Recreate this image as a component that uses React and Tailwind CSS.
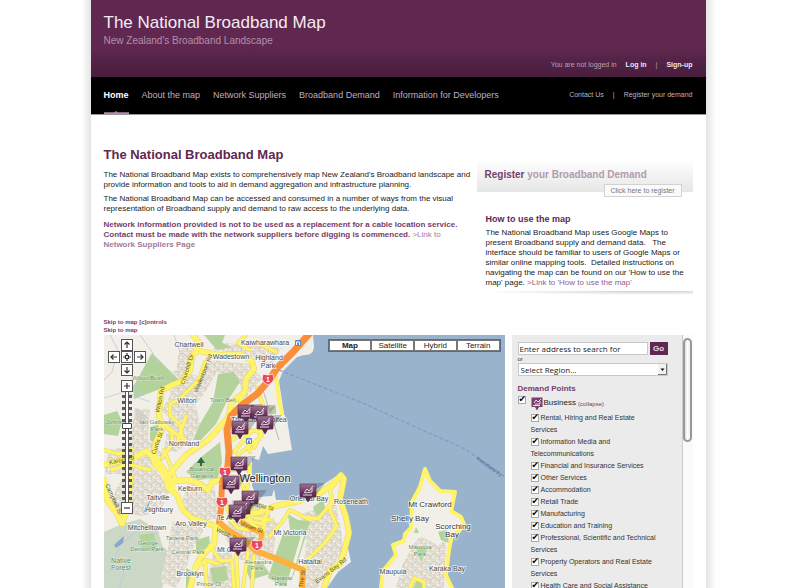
import React from "react";

const NAV = ["Home", "About the map", "Network Suppliers", "Broadband Demand", "Information for Developers"];
const MAP_TYPES = ["Map", "Satellite", "Hybrid", "Terrain"];
const SECTORS = [
  ["Rental, Hiring and Real Estate", "Services"],
  ["Information Media and", "Telecommunications"],
  ["Financial and Insurance Services"],
  ["Other Services"],
  ["Accommodation"],
  ["Retail Trade"],
  ["Manufacturing"],
  ["Education and Training"],
  ["Professional, Scientific and Technical", "Services"],
  ["Property Operators and Real Estate", "Services"],
  ["Health Care and Social Assistance"],
];

const PINS = [[246, 412], [259, 413], [265, 423], [240, 428], [239, 464], [231, 483], [250, 498], [242, 508], [237, 512], [308, 491], [238, 545]];
const SHIELDS = [[268, 379], [225, 472], [222, 502], [257, 545]];

const PARKS = [
  "M152 353 L182 383 L160 389 L134 399 L133 387 Z",
  "M218 374 L234 372 L240 382 L226 403 L216 424 L201 440 L193 440 L200 424 L213 402 Z",
  "M104 415 L117 411 L122 421 L118 436 L104 434 Z",
  "M150 427 L161 424 L163 433 L156 444 L150 440 Z",
  "M204 335 L225 335 L222 343 L232 347 L217 350 Z",
  "M220 442 L200 458 L186 472 L198 480 L218 478 L222 462 Z",
  "M284 531 L306 535 L294 574 L288 588 L268 578 L275 556 Z",
  "M196 540 L209 536 L211 551 L204 556 L196 553 Z",
  "M210 568 L226 566 L228 580 L213 584 Z",
  "M288 514 L298 520 L311 521 L306 531 L290 530 Z",
  "M139 535 L154 533 L157 552 L142 549 Z",
  "M245 566 L262 562 L270 574 L250 580 Z",
  "M186 568 L193 572 L193 588 L186 588 Z",
  "M313 507 L324 499 L325 511 L316 516 Z",
  "M438 532 L447 530 L449 543 L441 540 Z",
  "M416 527 L419 533 L414 533 Z",
  "M415 546 L428 548 L421 562 Z",
  "M416 581 L424 582 L422 588 L414 588 Z",
  "M270 408 L276 406 L276 414 L271 414 Z",
];

const SUBURBS = [
  "M180 346 L193 342 L192 362 L180 385 L162 392 L160 378 L176 370 Z",
  "M210 360 L250 364 L262 378 L246 398 L235 376 L217 372 L205 392 L190 412 L172 424 L162 410 L172 392 L200 380 Z",
  "M168 385 L184 372 L198 376 L192 398 L176 410 Z",
  "M168 420 L196 406 L200 424 L190 442 L176 452 L164 450 Z",
  "M135 408 L150 410 L148 438 L166 458 L140 474 L105 474 L108 450 L130 446 Z",
  "M128 472 L155 468 L170 490 L160 512 L140 516 L112 510 L116 488 Z",
  "M188 484 L214 486 L220 518 L196 522 L180 508 Z",
  "M172 522 L205 528 L192 550 L186 568 L176 588 L160 582 L168 548 Z",
  "M232 500 L262 506 L278 524 L272 560 L240 560 L226 540 Z",
  "M300 514 L336 504 L344 548 L330 572 L304 566 L306 540 Z",
  "M308 560 L326 562 L318 588 L304 588 Z",
  "M412 536 L446 548 L444 588 L398 588 L398 568 Z",
  "M214 342 L262 346 L282 348 L270 366 L240 354 L214 350 Z",
  "M214 548 L232 552 L234 588 L206 588 Z",
];

const MAIN_ROADS = [
  "M193 335 L199 343 L199 350 L192 356 L190 370 L182 381 L170 386 L161 391 L160 405 L159 416 L162 430 L156 442 L153 457",
  "M196 350 L208 353 L220 355 L240 354 L252 361 L254 369 L246 379 L245 392 L232 402 L228 418 L208 440 L186 455 L167 477",
  "M104 465 L120 461 L136 457 L146 451 L152 456 L156 466 L166 474 L168 488 L177 495 L183 510 L192 518 L212 525 L224 529",
  "M167 478 L176 481 L190 480 L200 484 L208 490 L212 482 L222 480",
  "M104 480 L107 500 L116 512 L122 524 L127 510 L129 490 L131 476",
  "M216 526 L214 544 L200 558 L196 566 L190 588",
  "M230 508 L244 513 L258 513 L275 506 L296 502 L316 496 L331 485 L341 475 L344 479 L340 499 L346 517 L349 533 L344 552 L340 564 L330 570 L324 588",
];

const MINOR_ROADS = [
  "M205 362 L199 380 L178 400 L170 404 L170 415 L180 425 L183 440",
  "M161 420 L172 431 L172 444 L162 458",
  "M186 416 L178 440 M163 425 L185 440",
  "M104 450 L118 454 L132 449 M112 470 L128 464 L150 470",
  "M257 388 L262 402 L266 415 L257 430 M246 388 L240 402",
  "M232 440 L246 430 L262 432 L254 448 M234 452 L252 430 M238 455 L262 436 M244 428 L250 452",
  "M232 470 L250 466 L246 500 M240 480 L252 508",
  "M240 502 L258 532 M246 520 L262 524 L270 508 M262 540 L266 516 M255 518 L272 520 M250 524 L264 530 M270 536 L282 522 L290 510 L310 520",
  "M306 517 L318 519 L332 502 L330 490 L340 478 M332 496 L330 510 L337 526 L324 544 L307 560 L303 572",
  "M236 550 L238 588 M248 552 L243 588 M254 556 L252 588",
  "M210 545 L220 561 L232 560 L234 588 M196 568 L206 560 L218 564 M205 562 L207 588",
  "M230 520 L238 528 L250 530 M224 500 L232 520",
  "M410 588 L414 578 L424 582 L424 588",
  "M246 335 L238 343 L250 350 M262 345 L276 352",
  "M170 478 L160 462 L150 455 M176 480 L164 450",
];

const LABELS = [
  ["Chartwell", 189, 347], ["Kaiwharawhara", 265, 345], ["Wadestown", 231, 359], ["Highland", 269, 360], ["Park", 268, 368],
  ["Wilton", 187, 403], ["Northland", 184, 446], ["Kelburn", 190, 491], ["Taitville", 158, 500], ["Highbury", 159, 512],
  ["Mitchelltown", 147, 530], ["Aro Valley", 191, 526], ["Brooklyn", 190, 576], ["Mt Victoria", 290, 535],
  ["Hataitai", 310, 564], ["Roseneath", 351, 504], ["Oriental Bay", 309, 501], ["Te Aro", 227, 520], ["Mt Cook", 230, 552],
  ["Thorndon", 246, 422], ["Pipitea", 276, 422], ["Maupuia", 393, 574], ["Karaka Bay", 447, 571],
];
const BIG_LABELS = [["Mt Crawford", 430, 507], ["Shelly Bay", 410, 521], ["Scorching", 453, 529], ["Bay", 452, 537]];
const PARK_LABELS = [
  ["Wilton Bush", 148, 380], ["Town Belt", 223, 402], ["Ian Galloway", 157, 424], ["Park", 157, 431], ["Johnston", 118, 424],
  ["Botanical", 202, 471], ["Gardens", 202, 478], ["Tanera Park", 182, 540], ["George", 148, 545], ["Denton Park", 147, 551],
  ["Central Park", 188, 554], ["Alexandra", 258, 564], ["Park", 257, 570], ["Hataitai", 282, 580], ["Park", 281, 586],
  ["Maupuia", 420, 549], ["Park", 420, 556], ["Prince Of", 209, 586],
];

function PinShape({ x, y }) {
  return (
    <g transform={`translate(${x} ${y})`}>
      <path d="M-5 7 L9 -8 L17 -8 L6 7 Z" fill="#444" opacity="0.3" />
      <path d="M-8 -7 H8 V6 H3 L0 11 L-3 6 H-8 Z" fill="url(#pinFill)" stroke="#57284c" strokeWidth="0.6" />
      <path d="M-5 4 H4 M-4 2 L-1 -2 L1 0 L5 -5 M-3 2 L4 1 L4 -3" fill="none" stroke="#eadfe8" strokeWidth="1" />
    </g>
  );
}

function CityMap() {
  return (
    <svg className="absolute inset-0 h-full w-full" viewBox="104 335 401 253" preserveAspectRatio="xMinYMin slice" fontFamily="'Liberation Sans', Arial, sans-serif" role="img" aria-label="Map of Wellington">
      <defs>
        <linearGradient id="pinFill" x1="0" y1="0" x2="0" y2="1">
          <stop offset="0" stopColor="#9a7592" />
          <stop offset="0.5" stopColor="#663058" />
          <stop offset="1" stopColor="#4f1e44" />
        </linearGradient>
        <pattern id="streets" width="9" height="8" patternUnits="userSpaceOnUse">
          <rect width="9" height="8" fill="#e6e1d6" />
          <path d="M0 2 Q3 0 5 3 T9 3 M2 8 Q1 5 4 4 M7 8 Q9 6 7 4" fill="none" stroke="#cdc6b6" strokeWidth="0.9" />
          <path d="M0 5 L3 6 M5 0 L6 2" stroke="#f9f7f2" strokeWidth="1" />
        </pattern>
      </defs>
      <rect x="104" y="335" width="401" height="253" fill="#99b3cc" />
      <path d="M104 335 H313 L314 347 Q313 356 304 355 L297 357 L283 371 L279 381 L284 414 L287 420 L292 450 L268 454 L263 446 L259 460 L252 458 L252 486 L257 497 L272 496 L274 489 L276 500 L297 500 L318 488 L341 473 L346 478 L342 498 L349 530 L348 548 L351 562 L338 572 L327 588 H104 Z" fill="#f2efe9" />
      <path d="M104 532 L122 524 L140 519 L158 530 L162 545 L172 556 L162 588 H104 Z" fill="#ccd8c6" />
      {SUBURBS.map((d) => <path key={d} d={d} fill="url(#streets)" />)}
      <path d="M425 469 L430 481 L440 491 L455 492 L451 511 L461 517 L464 524 L452 535 L449 550 L446 575 L452 588 H381 L383 571 L396 555 L393 545 L404 538 L411 528 L412 502 L420 487 Z" fill="#f2efe9" />
      <path d="M412 546 L420 536 L438 545 L446 540 L444 588 H396 L402 566 Z" fill="url(#streets)" />
      {PARKS.map((d) => <path key={d} d={d} fill="#b3d29c" />)}
      <g fill="none" stroke="#b5c9dc" strokeWidth="0.8">
        <path d="M110 335 L118 350 L112 372 L104 380 M140 335 L152 352 L158 366 M174 335 L180 352 M104 398 L124 392 L150 402 M132 384 L144 396" />
        <path d="M112 566 L120 545 L138 530 M120 588 L126 560 M178 524 L174 545" />
      </g>
      <path d="M114 545 L124 536 L123 543 L116 548 Z M143 513 L150 500 L148 510 Z" fill="#83a9d0" />
      <path d="M135 408 L147 416 L143 428 L136 420 Z" fill="#d5d1ca" />
      <path d="M303 534 L296 558 L287 588" fill="none" stroke="#f4f1ea" strokeWidth="3" />
      <path d="M262 387 L270 412 L279 440" fill="none" stroke="#bbb8b1" strokeWidth="1" />
      <g fill="none" stroke="#e4d765" strokeLinejoin="round" strokeLinecap="round">
        {MINOR_ROADS.map((d) => <path key={d} d={d} strokeWidth="4" />)}
        {MAIN_ROADS.map((d) => <path key={d} d={d} strokeWidth="6" />)}
      </g>
      <g fill="none" stroke="#fff36a" strokeLinejoin="round" strokeLinecap="round">
        {MINOR_ROADS.map((d) => <path key={d} d={d} strokeWidth="3" />)}
        {MAIN_ROADS.map((d) => <path key={d} d={d} strokeWidth="5" />)}
        <path d="M276 377 L279 400 L282 414" strokeWidth="4" />
        <path d="M381 588 L383 571 L396 555 L393 545 L404 541 L405 534 L411 528 L412 502 L420 487 L425 469 L430 481 L440 491 L455 492 L451 511 L461 517 L464 524 L460 530 L452 535 L449 550 L446 575 L452 588" strokeWidth="4" />
        <path d="M153 455 L166 477 L172 486" strokeWidth="7" />
      </g>
      <g fill="none" stroke="#f98f3a" strokeLinejoin="round">
        <path d="M310 333 L294 351 L277 368 L270 379 L257 394 L242 405 L231 416 L227 430 L229 452 L228 466 L222 484" strokeWidth="7" />
        <path d="M222 484 L221 508 L219 524" strokeWidth="6" />
        <path d="M219 522 L228 530 L243 539 L256 551 L280 560 L303 570 L302 588" stroke="#fdb03c" strokeWidth="6" />
        <path d="M240 521 L252 529 L262 533 L259 548" stroke="#fdb03c" strokeWidth="5" />
      </g>
      <path d="M279 370 L302 379 L365 404 L420 429 L465 449 L478 458 L505 477" fill="none" stroke="#8299cf" strokeWidth="1.2" strokeDasharray="4 2" />
      <text transform="translate(476 459) rotate(36)" fontSize="5" fill="#4b5d8c">Interisland Fy</text>
      <g fontSize="6" fill="#5d5b13" textAnchor="middle">
        <text transform="translate(189 370) rotate(-72)">Churchill Dr</text>
        <text transform="translate(205 374) rotate(-68)">Wadestown Rd</text>
        <text transform="translate(162 400) rotate(-78)">Wilton Rd</text>
        <text transform="translate(159 444) rotate(-70)">Curtis St</text>
        <text transform="translate(122 462) rotate(-12)">Karori Rd</text>
        <text transform="translate(112 500) rotate(66)">Campbell St</text>
        <text transform="translate(251 529) rotate(20)">Vivian St</text>
        <text transform="translate(226 536) rotate(26)">Webb St</text>
        <text transform="translate(262 508) rotate(14)">Cable St</text>
        <text transform="translate(332 572) rotate(-38)">Evans Bay Rd</text>
        <text transform="translate(304 579) rotate(-82)">The St</text>
      </g>
      <g fill="#5b8bd0"><rect x="295" y="340" width="6" height="6" rx="1" /><rect x="246" y="438" width="6" height="6" rx="1" /></g>
      <path d="M296.500 345 V342 H299.500 V345 M247.500 443 V440 H250.500 V443" fill="none" stroke="#fff" strokeWidth="1" />
      <path d="M201 457 L205 463 H202 V466 H200 V463 H197 Z" fill="#2f6a3c" />
      <g fontSize="6" textAnchor="middle" fill="#5f8c5d" stroke="#ffffff" strokeWidth="1" strokeOpacity="0.5" paintOrder="stroke">
        {PARK_LABELS.map(([t, x, y]) => <text key={t + x + y} x={x} y={y}>{t}</text>)}
        <text x="121" y="563" fontSize="7">Native</text>
        <text x="121" y="570" fontSize="7">Forest</text>
      </g>
      <g fontSize="7" textAnchor="middle" fill="#484848" stroke="#fff" strokeWidth="1.6" strokeOpacity="0.8" paintOrder="stroke">
        {LABELS.map(([t, x, y]) => <text key={t + x} x={x} y={y}>{t}</text>)}
      </g>
      <g fontSize="8" textAnchor="middle" fill="#333" stroke="#fff" strokeWidth="1.6" strokeOpacity="0.8" paintOrder="stroke">
        {BIG_LABELS.map(([t, x, y]) => <text key={t} x={x} y={y}>{t}</text>)}
      </g>
      <text x="265" y="482" fontSize="11" textAnchor="middle" fill="#222" stroke="#fff" strokeWidth="2" strokeOpacity="0.8" paintOrder="stroke">Wellington</text>
      {SHIELDS.map(([x, y]) => (
        <g key={x} transform={`translate(${x} ${y})`}>
          <path d="M-5 -5 Q0 -3 5 -5 L6 0 Q5 4 0 6 Q-5 4 -6 0 Z" fill="#e8485a" stroke="#fff" strokeWidth="0.7" />
          <text y="3" fontSize="7" fontWeight="700" textAnchor="middle" fill="#fff">1</text>
        </g>
      ))}
      {PINS.map(([x, y]) => <PinShape key={x} x={x} y={y} />)}
    </svg>
  );
}

function MapButton({ label, d, className = "" }) {
  return (
    <button aria-label={label} className={`flex size-[12px] items-center justify-center border border-[#555] bg-white ${className}`}>
      <svg viewBox="0 0 10 10" className="size-[10px]" fill="none" stroke="#333" strokeWidth="1.2"><path d={d} /></svg>
    </button>
  );
}

function MapControls() {
  return (
    <div className="absolute top-[4px] left-[4px] flex w-[38px] flex-col items-center">
      <MapButton label="Pan up" d="M5 8 V2 M2.500 4.500 L5 2 L7.500 4.500" />
      <div className="flex gap-px">
        <MapButton label="Pan left" d="M8 5 H2 M4.500 2.500 L2 5 L4.500 7.500" />
        <MapButton label="Centre map" d="M5 1 V3.500 M5 6.500 V9 M1 5 H3.500 M6.500 5 H9 M3.500 3.500 H6.500 V6.500 H3.500 Z" />
        <MapButton label="Pan right" d="M2 5 H8 M5.500 2.500 L8 5 L5.500 7.500" />
      </div>
      <MapButton label="Pan down" d="M5 2 V8 M2.500 5.500 L5 8 L7.500 5.500" className="mt-px" />
      <MapButton label="Zoom in" d="M5 2 V8 M2 5 H8" className="mt-1" />
      <div className="flex h-[110px] w-[10px] justify-center bg-[repeating-linear-gradient(to_bottom,transparent_0px,transparent_3px,#5a5a5a_3px,#5a5a5a_6px)]">
        <input
          type="range"
          min="0"
          max="17"
          defaultValue="5"
          aria-label="Zoom level"
          className="h-full w-[10px] appearance-none bg-[linear-gradient(to_right,transparent_3px,#555_3px,#555_4px,#fff_4px,#fff_6px,#555_6px,#555_7px,transparent_7px)] [writing-mode:vertical-lr] [&::-webkit-slider-thumb]:h-[6px] [&::-webkit-slider-thumb]:w-[10px] [&::-webkit-slider-thumb]:appearance-none [&::-webkit-slider-thumb]:rounded-[1px] [&::-webkit-slider-thumb]:border [&::-webkit-slider-thumb]:border-[#444] [&::-webkit-slider-thumb]:bg-white"
        />
      </div>
      <MapButton label="Zoom out" d="M2 5 H8" />
    </div>
  );
}

function Check({ id }) {
  return (
    <input
      id={id}
      type="checkbox"
      defaultChecked
      className="inline-block size-[8px] shrink-0 appearance-none border border-[#aaa] bg-white align-middle checked:before:-mt-[2px] checked:before:block checked:before:font-['DejaVu_Sans'] checked:before:text-[9px] checked:before:leading-[8px] checked:before:text-black checked:before:content-['✔']"
    />
  );
}

function Sidebar() {
  return (
    <aside className="ml-[7px] flex w-[181px] overflow-hidden">
      <div className="min-w-0 flex-1 bg-[#ebebeb] pt-[7px] pl-[6px]">
        <form className="w-[150px]">
          <div className="flex gap-[2px]">
            <input aria-label="Address" defaultValue="Enter address to search for" className="h-[13px] min-w-0 flex-1 border border-[#c8c8c8] bg-white px-px font-['Open_Sans',sans-serif] text-[8px] text-[#222]" />
            <button type="button" className="h-[13px] w-[18px] bg-[#602850] text-[8px] leading-[13px] font-bold text-[#eadfe8]">Go</button>
          </div>
          <label htmlFor="region" className="block text-[6px] leading-[8px] text-[#333]">or</label>
          <div className="relative">
            <select id="region" className="block h-[13px] w-full appearance-none border border-[#c8c8c8] bg-white px-[2px] font-['Open_Sans',sans-serif] text-[8px] leading-[11px] text-[#222]">
              <option>Select Region...</option>
            </select>
            <svg viewBox="0 0 9 11" className="pointer-events-none absolute top-px right-px h-[11px] w-[9px]">
              <path d="M0 0 H9 V11 H0 Z" fill="#f1f1f1" />
              <path d="M8.500 0 V10.500 H0" fill="none" stroke="#777" />
              <path d="M2.500 4.500 H6.500 L4.500 7 Z" fill="#111" />
            </svg>
          </div>
        </form>
        <h2 className="mt-[7px] text-[8px] leading-[12px] font-bold text-[#75406a]">Demand Points</h2>
        <div className="flex h-[17px] items-start pt-px">
          <Check id="business" />
          <svg viewBox="0 0 12 14" className="mt-px ml-[5px] h-[14px] w-[12px]">
            <path d="M0.500 0.500 H11.500 V10 H8 L6 13.500 L4 10 H0.500 Z" fill="#75406a" />
            <path d="M2 8.500 H9 M3 6 L5 3 L7 5 L10 2 M4 7 H9 V4" fill="none" stroke="#eadfe8" />
          </svg>
          <label htmlFor="business" className="mt-px ml-px text-[8px] leading-[12px] text-[#222]">Business</label>
          <button className="mt-[2px] ml-[2px] text-[6px] leading-[12px] text-[#75406a]">(collapse)</button>
        </div>
        <ul className="pl-[13px] text-[7px] leading-[12px] whitespace-nowrap text-[#333]">
          {SECTORS.map(([first, second], i) => (
            <li key={first}>
              <Check id={`sector-${i}`} />
              <label htmlFor={`sector-${i}`} className="pl-[2px]">{first}{second && <><br />{second}</>}</label>
            </li>
          ))}
        </ul>
      </div>
      <div className="w-[11px] border-l border-[#ccc] bg-[#fafafa] pt-[3px]">
        <div className="h-[104px] w-[9px] rounded-full border-2 border-[#999] bg-[linear-gradient(to_right,#ddd,#fff,#eee)]" />
      </div>
    </aside>
  );
}

export default function App() {
  return (
    <div className="flex h-screen justify-center overflow-hidden bg-white pr-[3px] font-['Liberation_Sans',Arial,sans-serif]">
      <div className="w-[9px] bg-[linear-gradient(to_right,#ffffff,#e4e4e4)]" />
      <div className="flex w-full max-w-[615px] flex-col">
        <header>
          <div className="flex h-[77px] flex-col justify-between bg-[linear-gradient(to_bottom,#602850_0%,#602850_60%,#481d3d_100%)] px-[13px] pt-[13px] pb-[6px]">
            <div>
              <h1 className="text-[17px] leading-[20px] text-[#f4ecf2]">The National Broadband Map</h1>
              <p className="text-[10px] leading-[16px] text-[#b28fab]">New Zealand's Broadband Landscape</p>
            </div>
            <div className="flex justify-end gap-[9px] text-[7px] leading-[12px] text-[#b9a0b4]">
              <span>You are not logged in</span>
              <a href="#login" className="font-bold text-[#efe4ec]">Log in</a>
              <span>|</span>
              <a href="#signup" className="font-bold text-[#efe4ec]">Sign-up</a>
            </div>
          </div>
          <div className="flex h-[38px] justify-between border-b border-[#999] bg-black px-[13px]">
            <nav className="flex gap-[13px] text-[9px] leading-[37px] text-[#c4aac0]">
              {NAV.map((item, i) => (
                <a key={item} href="#nav" className={i === 0 ? "flex flex-col font-bold text-white" : ""}>
                  {item}
                  {i === 0 && <svg viewBox="0 0 24 4" preserveAspectRatio="none" className="-mt-[3px] h-[4px] w-full"><path d="M0 1.500 H10 L11.500 0 L13 1.500 H24 V4 H0 Z" fill="#b58cb0" /></svg>}
                </a>
              ))}
            </nav>
            <div className="flex gap-[9px] text-[7px] leading-[35px] text-[#bdb4bb]">
              <a href="#contact">Contact Us</a>
              <span>|</span>
              <a href="#register">Register your demand</a>
            </div>
          </div>
        </header>

        <main className="flex min-h-0 flex-1 flex-col pr-[13px] pl-[13px]">
          <div className="flex h-[203px] justify-between">
            <section className="w-[360px] pt-[32px] text-[8px] leading-[10px] whitespace-nowrap text-[#222]">
              <h2 className="mb-[7px] text-[13px] leading-[16px] font-bold text-[#602850]">The National Broadband Map</h2>
              <p>The National Broadband Map exists to comprehensively map New Zealand's Broadband landscape and<br />provide information and tools to aid in demand aggregation and infrastructure planning.</p>
              <p className="mt-[4px]">The National Broadband Map can be accessed and consumed in a number of ways from the visual<br />representation of Broadband supply and demand to raw access to the underlying data.</p>
              <p className="mt-[6px] font-bold text-[#75406a]">Network information provided is not to be used as a replacement for a cable location service.<br />Contact must be made with the network suppliers before digging is commenced. <a href="#suppliers" className="text-[#a07a9a]"><span className="font-normal">&gt;Link to</span><br />Network Suppliers Page</a></p>
            </section>
            <section className="w-[216px] pt-[44px]">
              <div className="relative h-[33px] bg-[linear-gradient(to_bottom,#ffffff,#e6e6e6)] px-2 pt-[8px]">
                <h2 className="text-[10px] leading-[16px] font-bold text-[#b09cac]"><span className="text-[#75406a]">Register</span> your Broadband Demand</h2>
                <button className="absolute right-[11px] -bottom-[5px] h-[13px] w-[78px] border border-[#d2d2d2] bg-[#fafafa] text-[7px] leading-[11px] text-[#777]">Click here to register</button>
              </div>
              <div className="px-[9px] pt-[21px] text-[8px] leading-[10px] whitespace-nowrap text-[#222]">
                <h3 className="mb-[3px] text-[9px] leading-[12px] font-bold text-[#602850]">How to use the map</h3>
                <p>The National Broadband Map uses Google Maps to<br />present Broadband supply and demand data. &nbsp; The<br />interface should be familiar to users of Google Maps or<br />similar online mapping tools. &nbsp;Detailed instructions on<br />navigating the map can be found on our 'How to use the<br />map' page. <a href="#howto" className="text-[#94608c]">&gt;Link to 'How to use the map'</a></p>
              </div>
              <div className="mt-[3px] h-[4px] bg-[radial-gradient(ellipse_at_80%_0%,#cfcfcf,#ffffff_70%)]" />
            </section>
          </div>
          <div className="flex flex-col items-start text-[6px] leading-[8px] font-bold text-[#75406a]">
            <a href="#controls">Skip to map [c]ontrols</a>
            <a href="#map">Skip to map</a>
          </div>
          <div className="mt-px flex min-h-0 flex-1">
            <div id="map" className="relative min-w-0 flex-1 overflow-hidden">
              <CityMap />
              <MapControls />
              <div className="absolute top-[4px] right-[4px] grid w-[173px] grid-cols-4 border border-[#5a6b85]">
                {MAP_TYPES.map((type, i) => (
                  <button key={type} className={`h-[11px] border border-[#777] bg-white text-[8px] leading-[9px] text-[#222] ${i === 0 ? "font-bold" : ""}`}>{type}</button>
                ))}
              </div>
            </div>
            <Sidebar />
          </div>
        </main>
      </div>
      <div className="w-[10px] bg-[linear-gradient(to_right,#e4e4e4,#ffffff)]" />
    </div>
  );
}
